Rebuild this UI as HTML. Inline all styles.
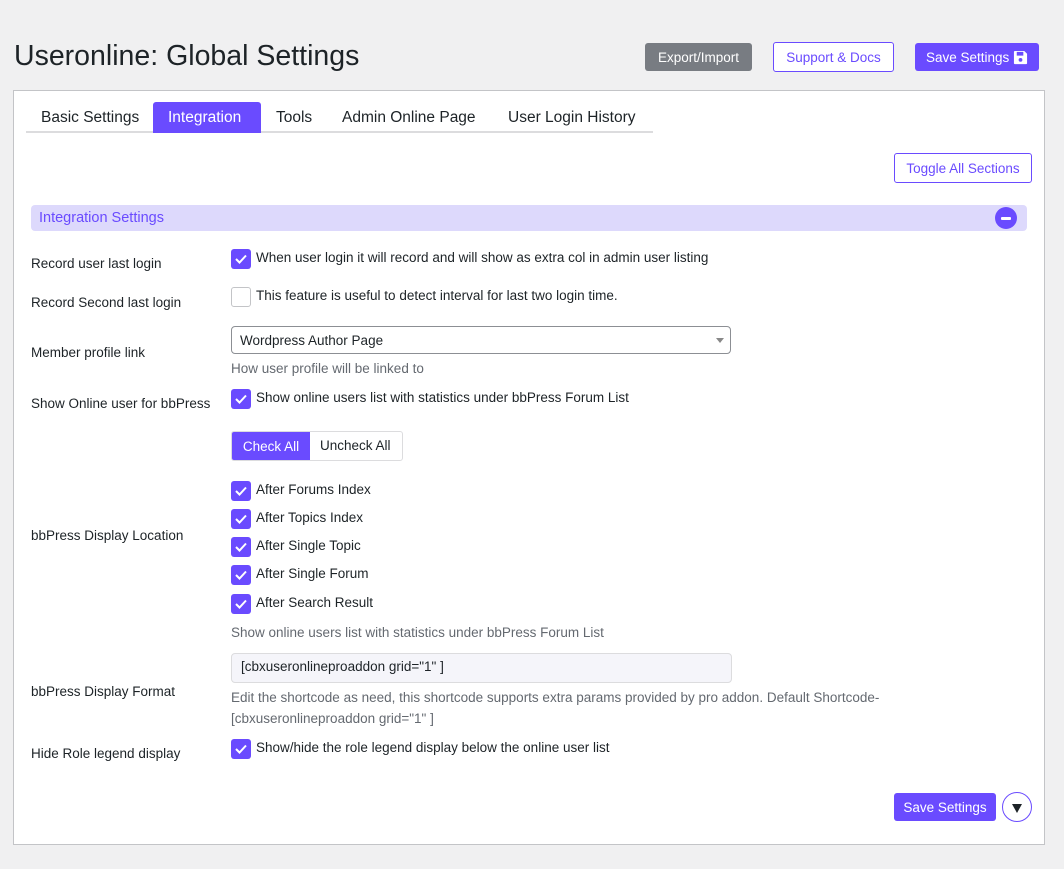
<!DOCTYPE html>
<html><head><meta charset="utf-8"><style>
*{box-sizing:border-box;margin:0;padding:0}
body{width:1064px;height:869px;background:#f0f0f1;font-family:"Liberation Sans",sans-serif;color:#1d2327;position:relative;overflow:hidden;font-size:13.5px}
.a{position:absolute;white-space:nowrap}
.btn{position:absolute;border-radius:3px;font-size:13.5px;display:flex;align-items:center;justify-content:center}
.p{background:#6a4bff;color:#fff}
.o{border:1px solid #6a4bff;color:#6a4bff;background:#fff}
.cb{position:absolute;left:231px;width:20px;height:20px;border-radius:3px;background:#6a4bff}
.cb svg{position:absolute;left:3px;top:4px}
.cb.e{background:#fff;border:1px solid #c3c4c7}
.lb{position:absolute;left:31px;font-size:13.5px;color:#1d2327}
.t{position:absolute;left:256px;font-size:13.5px;color:#1d2327;white-space:nowrap}
.d{position:absolute;left:231px;font-size:13.5px;color:#646970;white-space:nowrap}
</style></head><body>
<div class="a" style="left:14px;top:40px;font-size:28.5px;color:#1d2327">Useronline: Global Settings</div>
<div class="btn" style="left:645px;top:43px;width:107px;height:28px;background:#787c82;color:#fff">Export/Import</div>
<div class="btn o" style="left:773px;top:42px;width:121px;height:30px">Support &amp; Docs</div>
<div class="btn p" style="left:915px;top:43px;width:124px;height:28px">Save Settings&nbsp;<svg width="15" height="15" viewBox="0 0 16 16"><path d="M1 2a1 1 0 0 1 1-1h10l3 3v10a1 1 0 0 1-1 1H2a1 1 0 0 1-1-1z" fill="#fff"/><rect x="4" y="2" width="7" height="4" fill="#6a4bff"/><circle cx="8" cy="10.5" r="2" fill="#6a4bff"/></svg></div>

<div class="a" style="left:13px;top:90px;width:1032px;height:755px;background:#fff;border:1px solid #c3c4c7"></div>
<div class="a" style="left:26px;top:131px;width:627px;height:2px;background:#dcdcde"></div>
<div class="a" style="left:41px;top:109px;font-size:15.5px">Basic Settings</div>
<div class="a" style="left:153px;top:102px;width:108px;height:31px;background:#6a4bff;border-radius:3px 3px 0 0"></div>
<div class="a" style="left:168px;top:109px;font-size:15.5px;color:#fff">Integration</div>
<div class="a" style="left:276px;top:109px;font-size:15.5px">Tools</div>
<div class="a" style="left:342px;top:109px;font-size:15.5px">Admin Online Page</div>
<div class="a" style="left:508px;top:109px;font-size:15.5px">User Login History</div>

<div class="btn o" style="left:894px;top:153px;width:138px;height:30px">Toggle All Sections</div>
<div class="a" style="left:31px;top:205px;width:996px;height:26px;background:#ddd9fc;border-radius:4px"></div>
<div class="a" style="left:39px;top:210px;font-size:14.5px;color:#6a4bff">Integration Settings</div>
<div class="a" style="left:995px;top:207px;width:22px;height:22px;border-radius:50%;background:#6a4bff"><div style="position:absolute;left:6px;top:10px;width:10px;height:3px;background:#fff;border-radius:1px"></div></div>

<div class="lb" style="top:256px">Record user last login</div>
<div class="cb" style="top:249px"><svg width="14" height="12" viewBox="0 0 14 12"><path d="M2 6l3.5 3.5L12 2.5" stroke="#fff" stroke-width="2" fill="none"/></svg></div>
<div class="t" style="top:250px">When user login it will record and will show as extra col in admin user listing</div>

<div class="lb" style="top:295px">Record Second last login</div>
<div class="cb e" style="top:287px"></div>
<div class="t" style="top:288px">This feature is useful to detect interval for last two login time.</div>

<div class="lb" style="top:345px">Member profile link</div>
<div class="a" style="left:231px;top:326px;width:500px;height:28px;border:1px solid #8c8f94;border-radius:4px"></div>
<div class="a" style="left:240px;top:333px;font-size:13.5px">Wordpress Author Page</div>
<div class="a" style="left:716px;top:338px;width:0;height:0;border-left:4px solid transparent;border-right:4px solid transparent;border-top:5px solid #888"></div>
<div class="d" style="top:361px">How user profile will be linked to</div>

<div class="lb" style="top:396px">Show Online user for bbPress</div>
<div class="cb" style="top:389px"><svg width="14" height="12" viewBox="0 0 14 12"><path d="M2 6l3.5 3.5L12 2.5" stroke="#fff" stroke-width="2" fill="none"/></svg></div>
<div class="t" style="top:390px">Show online users list with statistics under bbPress Forum List</div>

<div class="a" style="left:231px;top:431px;width:172px;height:30px;border:1px solid #dcdcde;border-radius:3px"></div>
<div class="btn p" style="left:232px;top:432px;width:78px;height:28px;border-radius:2px 0 0 2px">Check All</div>
<div class="a" style="left:320px;top:438px;font-size:13.5px">Uncheck All</div>

<div class="lb" style="top:528px">bbPress Display Location</div>
<div class="cb" style="top:481px"><svg width="14" height="12" viewBox="0 0 14 12"><path d="M2 6l3.5 3.5L12 2.5" stroke="#fff" stroke-width="2" fill="none"/></svg></div>
<div class="t" style="top:482px">After Forums Index</div>
<div class="cb" style="top:509px"><svg width="14" height="12" viewBox="0 0 14 12"><path d="M2 6l3.5 3.5L12 2.5" stroke="#fff" stroke-width="2" fill="none"/></svg></div>
<div class="t" style="top:510px">After Topics Index</div>
<div class="cb" style="top:537px"><svg width="14" height="12" viewBox="0 0 14 12"><path d="M2 6l3.5 3.5L12 2.5" stroke="#fff" stroke-width="2" fill="none"/></svg></div>
<div class="t" style="top:538px">After Single Topic</div>
<div class="cb" style="top:565px"><svg width="14" height="12" viewBox="0 0 14 12"><path d="M2 6l3.5 3.5L12 2.5" stroke="#fff" stroke-width="2" fill="none"/></svg></div>
<div class="t" style="top:566px">After Single Forum</div>
<div class="cb" style="top:594px"><svg width="14" height="12" viewBox="0 0 14 12"><path d="M2 6l3.5 3.5L12 2.5" stroke="#fff" stroke-width="2" fill="none"/></svg></div>
<div class="t" style="top:595px">After Search Result</div>
<div class="d" style="top:625px">Show online users list with statistics under bbPress Forum List</div>

<div class="lb" style="top:684px">bbPress Display Format</div>
<div class="a" style="left:231px;top:653px;width:501px;height:30px;border:1px solid #dcdcde;border-radius:4px;background:#f5f5fa"></div>
<div class="a" style="left:241px;top:659px;font-size:13.5px">[cbxuseronlineproaddon grid="1" ]</div>
<div class="d" style="top:690px">Edit the shortcode as need, this shortcode supports extra params provided by pro addon. Default Shortcode-</div>
<div class="d" style="top:711px">[cbxuseronlineproaddon grid="1" ]</div>

<div class="lb" style="top:746px">Hide Role legend display</div>
<div class="cb" style="top:739px"><svg width="14" height="12" viewBox="0 0 14 12"><path d="M2 6l3.5 3.5L12 2.5" stroke="#fff" stroke-width="2" fill="none"/></svg></div>
<div class="t" style="top:740px">Show/hide the role legend display below the online user list</div>

<div class="btn p" style="left:894px;top:793px;width:102px;height:28px">Save Settings</div>
<div class="a" style="left:1002px;top:792px;width:30px;height:30px;border:1px solid #6a4bff;border-radius:50%;background:#fff"><div style="position:absolute;left:9px;top:11px;width:0;height:0;border-left:5.5px solid transparent;border-right:5.5px solid transparent;border-top:9px solid #1d2327"></div></div>
</body></html>
